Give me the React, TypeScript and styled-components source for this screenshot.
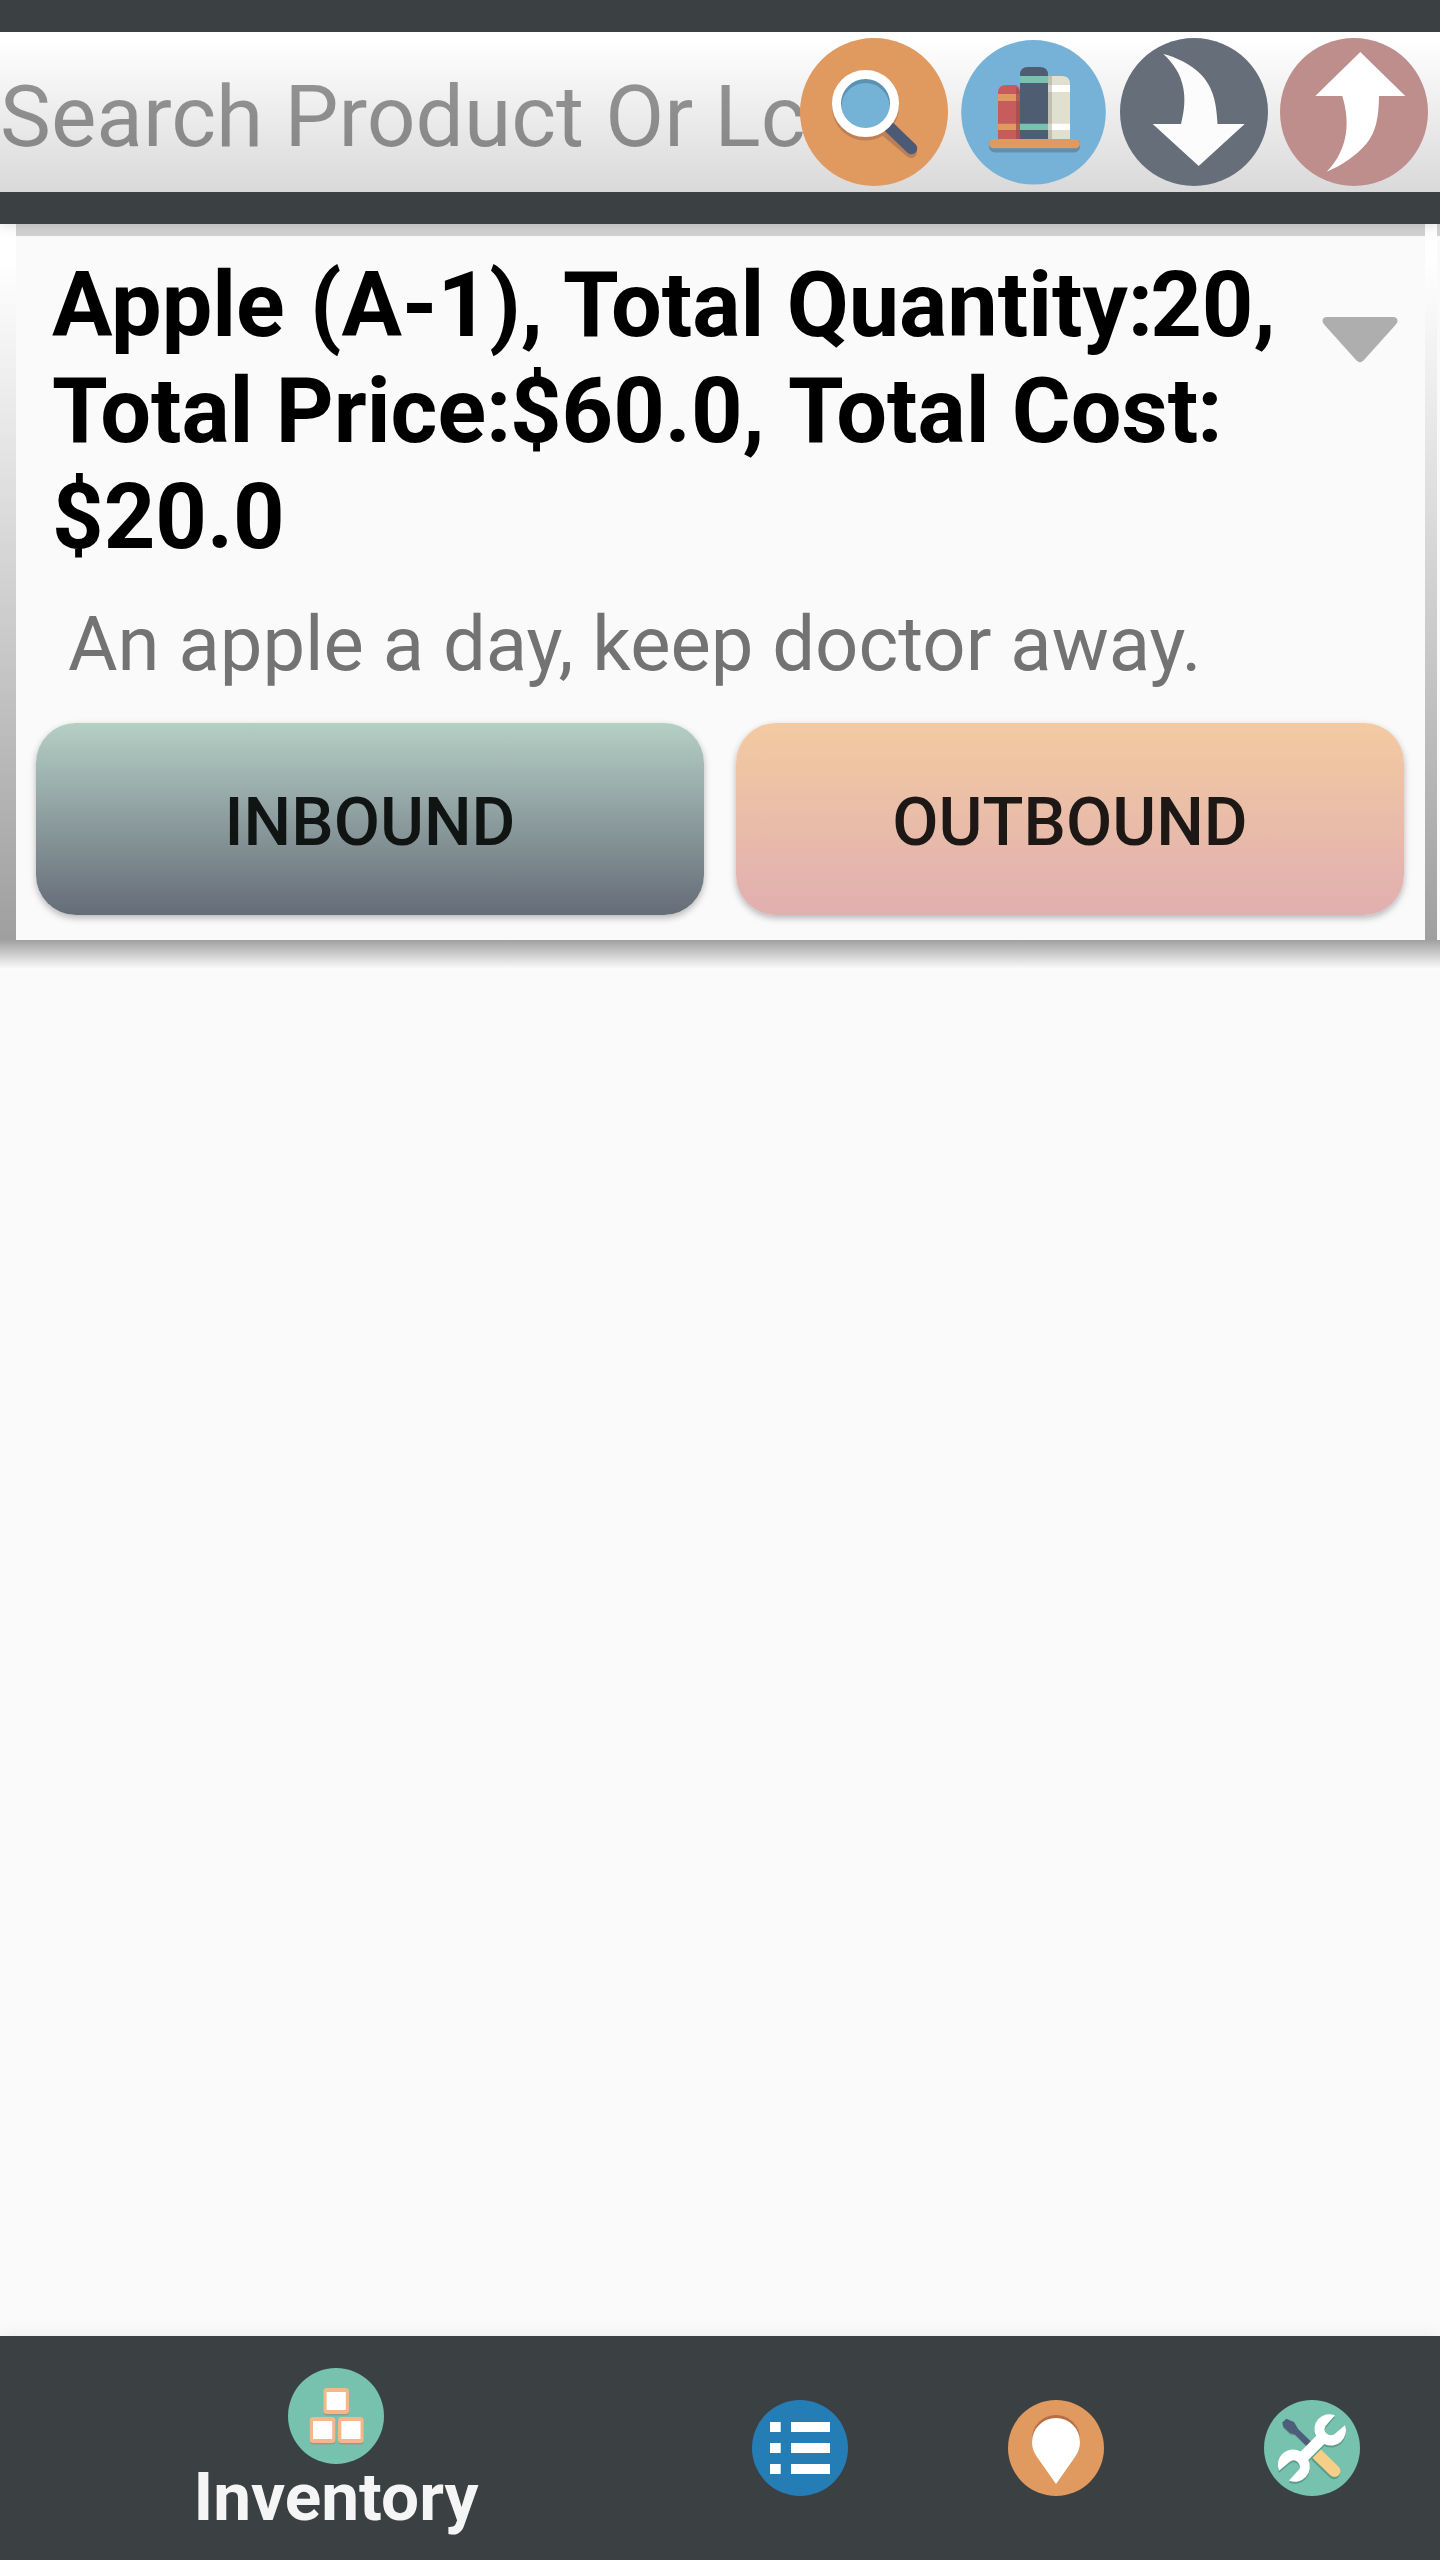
import React from 'react';
import styled, { createGlobalStyle } from 'styled-components';

const GlobalStyle = createGlobalStyle`
  *, *::before, *::after { box-sizing: border-box; }
  body { margin: 0; background: #fafafa; font-family: Roboto, "Noto Sans", sans-serif; }
  button { border: 0; padding: 0; margin: 0; background: none; font-family: inherit; display: block; }
  svg { display: block; }
  h2, p { margin: 0; }
`;

const Screen = styled.div`
  width: 1440px;
  height: 2560px;
  display: flex;
  flex-direction: column;
  background: #fafafa;
  overflow: hidden;
`;

const Header = styled.header`
  position: relative;
  z-index: 1;
  flex: none;
  padding: 32px 0;
  background: #3b4043;
  box-shadow: 0 2px 12px rgba(0, 0, 0, 0.13);
`;

const SearchBar = styled.div`
  height: 160px;
  display: flex;
  background: linear-gradient(#ffffff 4%, #d9d9d9);
`;

const Hint = styled.div`
  width: 800px;
  white-space: nowrap;
  font-size: 85.7px;
  line-height: 101px;
  padding-top: 34px;
  color: rgba(0, 0, 0, 0.4);
`;

const Actions = styled.div`
  position: relative;
  display: flex;
  padding-top: 6px;
`;

const Action = styled.button<{ $inset?: number }>`
  width: 160px;
  height: 148px;
  padding-left: ${p => p.$inset ?? 0}px;
`;

const Card = styled.section`
  flex: none;
  height: 716px;
  display: flex;
`;

const Edge = styled.div<{ $width: number }>`
  flex: none;
  width: ${p => p.$width}px;
  background: linear-gradient(#ffffff 5%, #9f9f9f);
`;

const CardBody = styled.div`
  flex: 1;
  border-top: 12px solid #d3d3d3;
  background: #fafafa;
`;

const CardRim = styled.div`
  flex: none;
  width: 3px;
  border-top: 12px solid #d3d3d3;
`;

const CardShade = styled.div`
  flex: none;
  height: 30px;
  background: linear-gradient(#a0a0a0, #ffffff);
`;

const CardHead = styled.div`
  display: flex;
  justify-content: space-between;
  padding: 17px 27px 0 36px;
`;

const Title = styled.h2`
  width: 1240px;
  font-size: 90px;
  line-height: 106px;
  font-weight: 700;
  color: #000;
  white-space: nowrap;
`;

const Kern = styled.span<{ $by: number }>`
  letter-spacing: ${p => p.$by}px;
`;

const Toggle = styled.button`
  width: 76px;
  height: 46px;
  margin-top: 64px;
`;

const Note = styled.p`
  padding: 28px 0 0 52px;
  font-size: 76px;
  line-height: 90px;
  color: #737373;
  white-space: nowrap;
`;

const Moves = styled.div`
  display: flex;
  gap: 32px;
  padding: 34px 0 0 20px;
`;

const MoveButton = styled.button<{ $from: string; $to: string; $ink: string }>`
  width: 668px;
  height: 192px;
  border-radius: 40px;
  background: linear-gradient(${p => p.$from}, ${p => p.$to});
  box-shadow: 0 3px 7px rgba(0, 0, 0, 0.28);
  color: ${p => p.$ink};
  font-size: 67.2px;
  font-weight: 500;
  line-height: 80px;
  padding-top: 6px;
`;

const Content = styled.main`
  flex: 1;
`;

const Nav = styled.nav`
  flex: none;
  height: 224px;
  display: flex;
  background: #3b4043;
  box-shadow: 0 0 16px rgba(0, 0, 0, 0.08);
`;

const Tab = styled.button<{ $active?: boolean }>`
  width: ${p => (p.$active ? 672 : 256)}px;
  height: 224px;
  display: flex;
  flex-direction: column;
  align-items: center;
  padding-top: ${p => (p.$active ? 32 : 64)}px;
`;

const TabLabel = styled.span`
  font-size: 67.5px;
  line-height: 80px;
  font-weight: 700;
  color: #f5f5f5;
  margin-top: -7px;
`;

const SearchIcon = () => (
  <svg width="148" height="148" viewBox="0 0 148 148">
    <circle cx="74" cy="74" r="74" fill="#e0995f" />
    <path d="M84 91l27 23" stroke="#b98057" strokeWidth="12" strokeLinecap="round" />
    <circle cx="65.5" cy="69" r="33.5" fill="#bf8154" />
    <path d="M84 84l27.5 26.5" stroke="#4c5a76" strokeWidth="11.5" strokeLinecap="round" />
    <circle cx="65.5" cy="65.5" r="29" fill="#5c91b2" />
    <circle cx="65.5" cy="69" r="24" fill="#74b2d6" />
    <circle cx="65.5" cy="65.5" r="29" fill="none" stroke="#fff" strokeWidth="9" />
  </svg>
);

const BooksIcon = () => (
  <svg width="145" height="146" viewBox="0 -1 145 146">
    <circle cx="72.5" cy="72.3" r="72.3" fill="#76b2d7" />
    <path d="M28 101h91v5a6 6 0 0 1-6 6.500H34a6 6 0 0 1-6-6.500z" fill="#5e8fae" />
    <path d="M37 99V53q0-8 8-8h8q6 0 6 8v46z" fill="#c75c5c" />
    <path d="M37 54h22v7H37zM37 83.700h22V90H37z" fill="#e0995f" />
    <path d="M55 47q4 2 4 6v46h-4z" fill="#a34b50" opacity=".75" />
    <path d="M59 99V35q0-8 8-8h12q8 0 8 8v64z" fill="#4f5d73" />
    <path d="M59 36h28v7H59zM59 83.700h28V90H59z" fill="#77c3b0" />
    <path d="M87 99V36h14q8 0 8 8v55z" fill="#e0e0d1" />
    <path d="M87 45h22v7H87zM87 83.700h22V90H87z" fill="#fff" />
    <path d="M87 36h4v63h-4z" fill="#86867c" opacity=".36" />
    <rect x="28" y="99" width="91" height="9.300" rx="4.600" fill="#e0995f" />
  </svg>
);

const DownIcon = () => (
  <svg width="148" height="148" viewBox="0 0 148 148">
    <circle cx="74" cy="74" r="74" fill="#666e79" />
    <path d="M43.300 16C56 19 71 26.500 80.500 36C92 48 96.500 62 97.500 86H124.700L78.700 128L32.700 86H61C68 60 65.500 36 43.300 16Z" fill="#fcfcfc" />
  </svg>
);

const UpIcon = () => (
  <svg width="148" height="148" viewBox="0 0 148 148">
    <circle cx="74" cy="74" r="74" fill="#be8e8d" />
    <path d="M80.300 14L125.300 58H99C98.700 80 96 93 87 105C76 118 61 128 46.700 133.700C69 111 70 83 62.300 58H35.300Z" fill="#fff" />
  </svg>
);

const CaretIcon = () => (
  <svg width="76" height="46" viewBox="0 0 76 46">
    <path d="M5 0H71Q75.500 0 75.500 4Q75.500 6 73 8.500L41.500 43.500Q38 47 34.500 43.500L3 8.500Q0.500 6 0.500 4Q0.500 0 5 0Z" fill="#aeaeae" />
  </svg>
);

const BoxesIcon = () => (
  <svg width="96" height="96" viewBox="0 0 96 96">
    <circle cx="48" cy="48" r="48" fill="#76c2ae" />
    {[[35.3, 20], [21.7, 49], [50, 49]].map(([x, y]) => (
      <g key={x}>
        <rect x={x} y={y + 1.2} width="25.700" height="26.300" rx="3.500" fill="#8f9f86" />
        <rect x={x} y={y} width="25.700" height="26" rx="3.500" fill="#f5b68c" />
        <rect x={x + 3.3} y={y + 4} width="19.200" height="18" fill="#fff" />
      </g>
    ))}
  </svg>
);

const ListIcon = () => (
  <svg width="96" height="96" viewBox="0 0 96 96">
    <circle cx="48" cy="48" r="48" fill="#257db6" />
    {[22, 43, 64].map(y => (
      <path key={y} d={`M18 ${y}h10.700v10H18zM39 ${y}h39v10H39z`} fill="#fff" />
    ))}
  </svg>
);

const PIN = 'M48 84L29 57Q24 50 24 42A24 24 0 0 1 72 42Q72 50 67 57Z';

const PinIcon = () => (
  <svg width="96" height="96" viewBox="0 0 96 96">
    <circle cx="48" cy="48" r="48" fill="#e0995f" />
    <circle cx="48" cy="39" r="24" fill="#b66e43" />
    <path d={PIN} fill="#fff" />
  </svg>
);

const WRENCH =
  'M71 15.300A15 15 0 0 0 52 36L36.700 51.500A15.300 15.300 0 0 0 15 70.700L25.500 62Q29 59 33 61.500Q37 65 35.500 69L25 80.500A15 15 0 0 0 44.300 60L60.300 44A15 15 0 0 0 81 25.300L70 34.500Q66 36.500 62.500 33.500Q59 30 61.500 26Z';

const ToolsIcon = () => (
  <svg width="96" height="96" viewBox="0 0 96 96">
    <circle cx="48" cy="48" r="48" fill="#76c2ae" />
    <path d="M18.300 24L19.300 28L26 34.500L31 35.500L43 47L47 43L34.300 30Z" fill="#5f9c8b" />
    <path d="M53 56.500L70 73" stroke="#5f9c8b" strokeWidth="12.500" strokeLinecap="round" />
    <path d="M18.300 22.500L22.300 18.700L30 22L34.300 29.300L48 42.500L43 46.500L31 34.500L26 33L19.300 26.700Z" fill="#4f5d7b" />
    <path d="M52 53L70.500 71" stroke="#f5cf87" strokeWidth="12" strokeLinecap="round" />
    <path d={WRENCH} transform="translate(0 2)" fill="#5d9c8a" />
    <path d={WRENCH} fill="#fff" />
  </svg>
);

const tabs = [
  { name: 'list', icon: <ListIcon /> },
  { name: 'location', icon: <PinIcon /> },
  { name: 'tools', icon: <ToolsIcon /> },
];

export default function App() {
  return (
    <Screen>
      <GlobalStyle />
      <Header>
        <SearchBar>
          <Hint>Search Product Or Lc</Hint>
          <Actions>
            <Action><SearchIcon /></Action>
            <Action $inset={1}><BooksIcon /></Action>
            <Action><DownIcon /></Action>
            <Action><UpIcon /></Action>
          </Actions>
        </SearchBar>
      </Header>
      <Card>
        <Edge $width={16} />
        <CardBody>
          <CardHead>
            <Title>
              Apple<Kern $by={3}> </Kern>(A-1), Total Quantity<Kern $by={-3}>:</Kern>20,<br />
              Total Price<Kern $by={-1.5}>:</Kern>$60.0,<Kern $by={1}> </Kern>Total Cos<Kern $by={-1}>t</Kern>:<br />
              $20.0
            </Title>
            <Toggle><CaretIcon /></Toggle>
          </CardHead>
          <Note>An apple a day, keep doctor away.</Note>
          <Moves>
            <MoveButton $from="#b5cfc5" $to="#656c78" $ink="#101413">INBOUND</MoveButton>
            <MoveButton $from="#f3caa1" $to="#e0afb0" $ink="#1d1815">OUTBOUND</MoveButton>
          </Moves>
        </CardBody>
        <Edge $width={12} />
        <CardRim />
      </Card>
      <CardShade />
      <Content />
      <Nav>
        <Tab $active>
          <BoxesIcon />
          <TabLabel>Inventory</TabLabel>
        </Tab>
        {tabs.map(t => (
          <Tab key={t.name}>{t.icon}</Tab>
        ))}
      </Nav>
    </Screen>
  );
}
